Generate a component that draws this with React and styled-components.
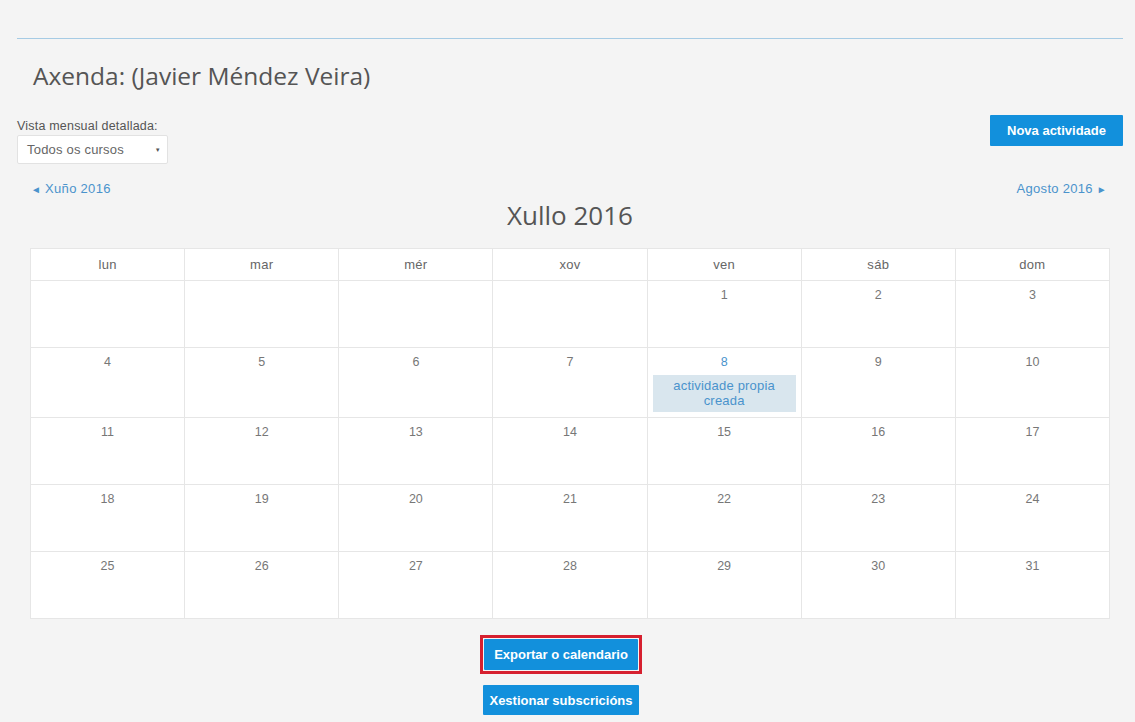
import React from 'react';
import styled, { createGlobalStyle } from 'styled-components';

const GlobalStyle = createGlobalStyle`
  html, body {
    margin: 0;
    padding: 0;
    background: #f4f4f4;
  }

  body {
    font-family: 'Liberation Sans', Arial, sans-serif;
    color: #555;
  }
`;

const Page = styled.div`
  padding: 38px 12px 6px 17px;
`;

const Rule = styled.div`
  border-top: 1px solid #a6cbe4;
`;

const Title = styled.h1`
  margin: 21px 0 0;
  padding-left: 16px;
  font-family: 'Open Sans', sans-serif;
  font-size: 24.5px;
  font-weight: 400;
  line-height: 32px;
  color: #555;
`;

const Controls = styled.div`
  display: flex;
  justify-content: space-between;
  align-items: flex-start;
  margin-top: 23px;
`;

const ViewPicker = styled.div`
  display: flex;
  flex-direction: column;
  padding-top: 4px;
`;

const Label = styled.label`
  font-size: 12.5px;
  line-height: 14px;
  letter-spacing: 0.2px;
  color: #555;
`;

const Select = styled.div`
  display: flex;
  align-items: center;
  justify-content: space-between;
  box-sizing: border-box;
  width: 151px;
  height: 29px;
  margin-top: 2px;
  padding: 0 6px 0 9px;
  background: #fff;
  border: 1px solid #e2e2e2;
  border-radius: 2px;
  font-size: 13px;
  letter-spacing: 0.2px;
  color: #666;

  & > span:last-child {
    font-size: 6px;
    color: #555;
  }
`;

const Button = styled.button`
  box-sizing: border-box;
  height: ${p => p.$height || 31}px;
  padding: 0 ${p => p.$pad || 10}px;
  border: none;
  border-radius: 1px;
  background: #1290dc;
  color: #fff;
  font-family: 'Liberation Sans', Arial, sans-serif;
  font-size: 13px;
  font-weight: 700;
  cursor: pointer;
`;

const NavRow = styled.div`
  display: flex;
  justify-content: space-between;
  margin-top: 18px;
  padding: 0 16px 0 14px;
`;

const NavLink = styled.a`
  font-size: 13px;
  line-height: 14px;
  letter-spacing: 0.3px;
  color: #4a93cc;
  text-decoration: none;
`;

const Arrow = styled.span`
  font-size: 10px;
`;

const MonthTitle = styled.h2`
  margin: 2px 0 0;
  text-align: center;
  font-family: 'Open Sans', sans-serif;
  font-size: 26px;
  font-weight: 400;
  line-height: 32px;
  color: #555;
`;

const Calendar = styled.table`
  width: calc(100% - 26px);
  margin: 17px 13px 0;
  border-collapse: collapse;
  table-layout: fixed;
  background: #fff;
`;

const HeadCell = styled.th`
  height: 31px;
  padding: 0;
  border: 1px solid #e6e6e6;
  font-size: 13px;
  font-weight: 400;
  letter-spacing: 0.3px;
  color: #666;
  text-align: center;
`;

const DayCell = styled.td`
  height: 67px;
  padding: 5px 5px;
  box-sizing: border-box;
  border: 1px solid #e6e6e6;
  vertical-align: top;
  text-align: center;
  font-size: 12.5px;
  color: ${p => (p.$hasEvent ? '#4a93cc' : '#777')};
`;

const DayNumber = styled.div`
  line-height: 14px;
  margin-top: 2px;
`;

const Event = styled.div`
  margin-top: 6px;
  padding: 3px 4px 4px;
  background: #d9e6ee;
  color: #4a93cc;
  font-size: 13px;
  letter-spacing: 0.2px;
  line-height: 15px;
`;

const Actions = styled.div`
  display: flex;
  flex-direction: column;
  align-items: center;
  gap: 11px;
  margin-top: 16px;
  padding-right: 18px;
`;

const Highlight = styled.div`
  padding: 1px;
  border: 3px solid #d6202f;
`;

const weekDays = ['lun', 'mar', 'mér', 'xov', 'ven', 'sáb', 'dom'];

// July 2016 starts on a Friday
const weeks = [
  [null, null, null, null, 1, 2, 3],
  [4, 5, 6, 7, 8, 9, 10],
  [11, 12, 13, 14, 15, 16, 17],
  [18, 19, 20, 21, 22, 23, 24],
  [25, 26, 27, 28, 29, 30, 31],
];

const events = {
  8: 'actividade propia creada',
};

const App = () => (
  <Page>
    <GlobalStyle />
    <Rule />
    <Title>Axenda: (Javier Méndez Veira)</Title>

    <Controls>
      <ViewPicker>
        <Label>Vista mensual detallada:</Label>
        <Select>
          <span>Todos os cursos</span>
          <span>▼</span>
        </Select>
      </ViewPicker>
      <Button $pad={17}>Nova actividade</Button>
    </Controls>

    <NavRow>
      <NavLink href="#">
        <Arrow>◄</Arrow> Xuño 2016
      </NavLink>
      <NavLink href="#">
        Agosto 2016 <Arrow>►</Arrow>
      </NavLink>
    </NavRow>
    <MonthTitle>Xullo 2016</MonthTitle>

    <Calendar>
      <thead>
        <tr>
          {weekDays.map(d => (
            <HeadCell key={d}>{d}</HeadCell>
          ))}
        </tr>
      </thead>
      <tbody>
        {weeks.map((week, i) => (
          <tr key={i}>
            {week.map((day, j) => (
              <DayCell key={j} $hasEvent={!!events[day]}>
                {day && <DayNumber>{day}</DayNumber>}
                {events[day] && <Event>{events[day]}</Event>}
              </DayCell>
            ))}
          </tr>
        ))}
      </tbody>
    </Calendar>

    <Actions>
      <Highlight>
        <Button $pad={10}>Exportar o calendario</Button>
      </Highlight>
      <Button $pad={6} $height={30}>
        Xestionar subscricións
      </Button>
    </Actions>
  </Page>
);

export default App;
